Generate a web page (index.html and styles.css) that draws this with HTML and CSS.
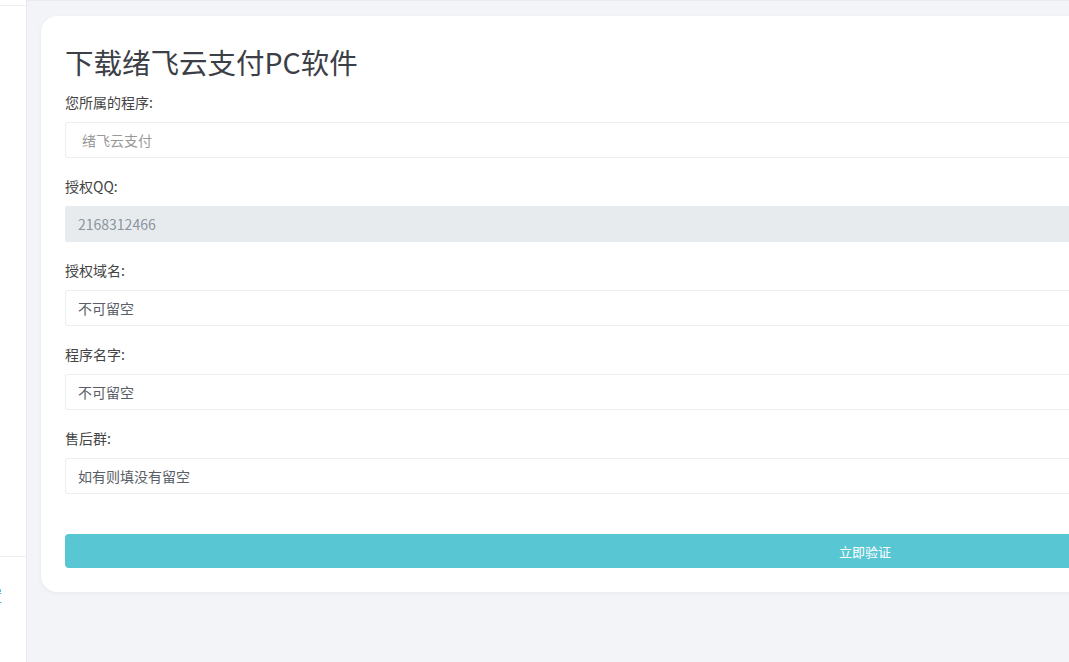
FILE: index.html
```html
<!DOCTYPE html>
<html lang="zh-CN">
<head>
<meta charset="utf-8">
<title>下载绪飞云支付PC软件</title>
<link rel="stylesheet" href="styles.css">
</head>
<body>
<div class="layout">
  <aside class="sidebar">
    <div class="side-top"></div>
    <div class="side-fill"></div>
    <div class="side-bottom">
      <span class="side-link">设置</span>
    </div>
  </aside>
  <main class="main">
    <div class="topbar"></div>
    <section class="card">
      <h1 class="title">下载绪飞云支付PC软件</h1>
      <form class="form">
        <div class="group">
          <label class="label">您所属的程序:</label>
          <input class="input input-select" type="text" placeholder="绪飞云支付">
        </div>
        <div class="group">
          <label class="label">授权QQ:</label>
          <input class="input input-disabled" type="text" value="2168312466" disabled>
        </div>
        <div class="group">
          <label class="label">授权域名:</label>
          <input class="input" type="text" value="不可留空">
        </div>
        <div class="group">
          <label class="label">程序名字:</label>
          <input class="input" type="text" value="不可留空">
        </div>
        <div class="group">
          <label class="label">售后群:</label>
          <input class="input" type="text" value="如有则填没有留空">
        </div>
        <button class="btn" type="button">立即验证</button>
      </form>
    </section>
  </main>
</div>
</body>
</html>
```
FILE: styles.css
```css
html, body {
  margin: 0;
  padding: 0;
  height: 100%;
  overflow: hidden;
}
body {
  font-family: "Noto Sans CJK SC", "Noto Sans", "Liberation Sans", sans-serif;
  background: #f3f4f8;
  color: #444;
}
.layout {
  display: flex;
  height: 662px;
}
.sidebar {
  width: 26px;
  flex: none;
  background: #fff;
  border-right: 1px solid #e9eaf0;
  display: flex;
  flex-direction: column;
  overflow: hidden;
}
.side-top {
  height: 5px;
  border-bottom: 1px solid #eeeff3;
}
.side-fill {
  flex: none;
  height: 550px;
}
.side-bottom {
  border-top: 1px solid #eeeff3;
  padding-top: 25px;
  white-space: nowrap;
}
.side-link {
  display: inline-block;
  margin-left: -26px;
  font-size: 14px;
  line-height: 16px;
  color: #3a8ee6;
}
.main {
  flex: none;
  width: 1700px;
  padding: 0 0 0 14px;
  display: flex;
  flex-direction: column;
}
.topbar {
  height: 1px;
  background: #ebecf1;
  margin-left: -14px;
  margin-bottom: 15px;
}
.card {
  width: 1600px;
  background: #fff;
  border-radius: 16px;
  padding: 26px 24px 24px;
  box-shadow: 0 1px 4px rgba(30, 40, 80, 0.06);
}
.title {
  margin: 0 0 10px;
  font-size: 28.5px;
  line-height: 40px;
  font-weight: 400;
  color: #3c4046;
}
.form {
  display: flex;
  flex-direction: column;
}
.group {
  display: flex;
  flex-direction: column;
  margin-bottom: 18px;
}
.label {
  font-size: 14px;
  line-height: 20px;
  color: #444;
  margin-bottom: 10px;
}
.input {
  box-sizing: border-box;
  height: 36px;
  width: 100%;
  border: 1px solid #eeeeee;
  border-radius: 2px;
  background: #fff;
  padding: 0 12px;
  font-family: inherit;
  font-size: 14px;
  color: #5a5e66;
  outline: none;
}
.input::placeholder {
  color: #999;
}
.input-select {
  padding-left: 16px;
}
.input-disabled {
  background: #e8ebee;
  border-color: #e8ebee;
  color: #8a95a1;
  font-size: 14px;
}
.btn {
  margin-top: 22px;
  height: 34px;
  width: 100%;
  border: none;
  border-radius: 4px;
  background: #58c6d3;
  color: #fff;
  font-family: inherit;
  font-size: 13px;
  cursor: pointer;
}
```
